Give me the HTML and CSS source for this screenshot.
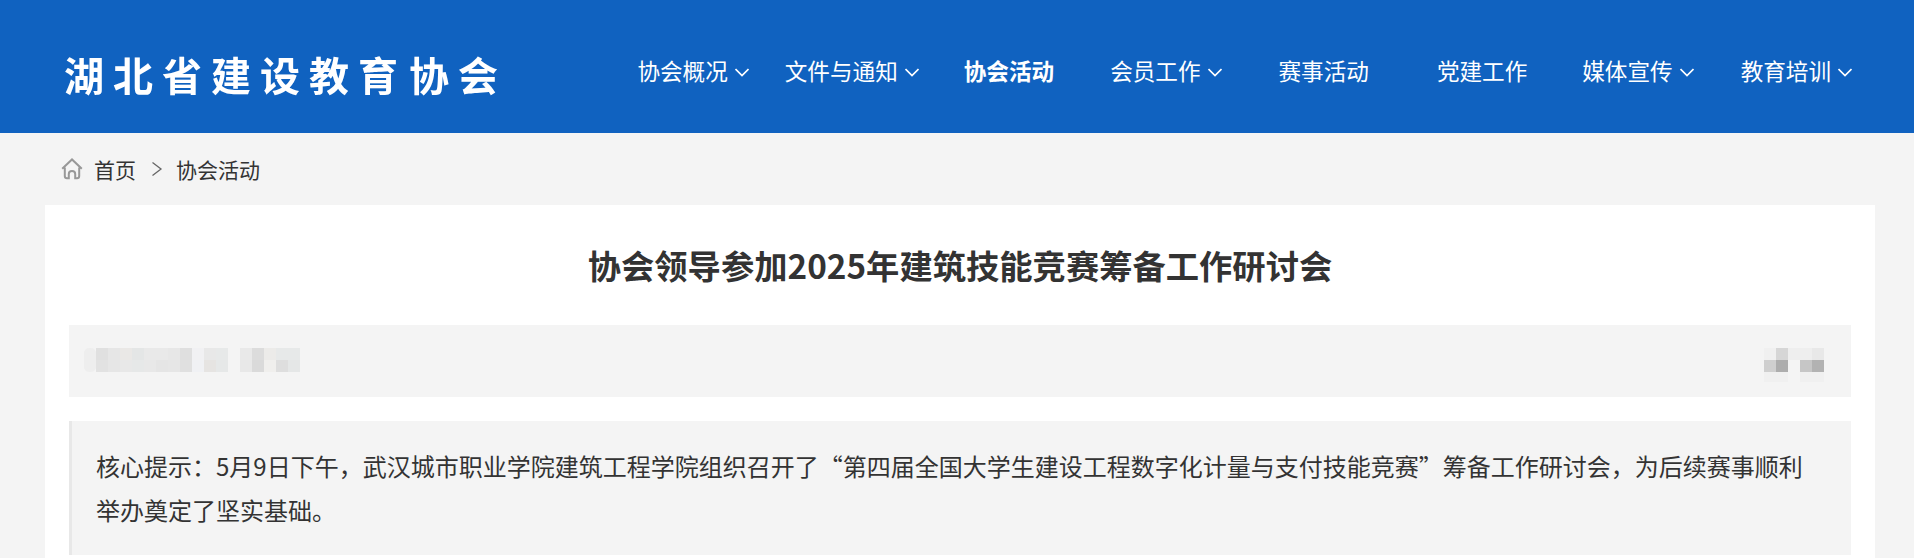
FILE: index.html
```html
<!DOCTYPE html>
<html lang="zh-CN">
<head>
    <meta charset="UTF-8">
    <meta name="viewport" content="width=device-width, initial-scale=1.0">
    <title>协会领导参加2025年建筑技能竞赛筹备工作研讨会</title>
    <link rel="stylesheet" href="styles.css">
</head>
<body>

<header class="site-header">
    <a class="logo" href="#">湖北省建设教育<span class="logo-end">协会</span></a>
    <nav class="main-nav">
        <a class="nav-item nav-a" href="#">协会概况<svg class="caret" viewBox="0 0 14 14"><path d="M.5 4 7 10.500 13.500 4"/></svg></a>
        <a class="nav-item nav-b" href="#">文件与通知<svg class="caret" viewBox="0 0 14 14"><path d="M.5 4 7 10.500 13.500 4"/></svg></a>
        <a class="nav-item nav-c active" href="#">协会活动</a>
        <a class="nav-item nav-d" href="#">会员工作<svg class="caret" viewBox="0 0 14 14"><path d="M.5 4 7 10.500 13.500 4"/></svg></a>
        <a class="nav-item nav-e" href="#">赛事活动</a>
        <a class="nav-item nav-f" href="#">党建工作</a>
        <a class="nav-item nav-g" href="#">媒体宣传<svg class="caret" viewBox="0 0 14 14"><path d="M.5 4 7 10.500 13.500 4"/></svg></a>
        <a class="nav-item" href="#">教育培训<svg class="caret" viewBox="0 0 14 14"><path d="M.5 4 7 10.500 13.500 4"/></svg></a>
    </nav>
</header>

<div class="crumbs">
    <svg class="home-icon" viewBox="0 0 22 22"><path d="M1.200 10.800 11 1.500l9.800 9.300M3.800 9.500V18c0 1.500.8 2.200 2.200 2.200h1.800v-4.200c0-1.800 1.300-3 3.200-3s3.200 1.200 3.200 3v4.200H16c1.400 0 2.200-.7 2.200-2.200V9.500"/></svg>
    <a href="#">首页</a>
    <svg class="crumb-sep" viewBox="0 0 12 18"><path d="M1.500 2.500 10 9l-8.500 6.500"/></svg>
    <a href="#">协会活动</a>
</div>

<main class="card">
    <h1>协会领导参加2025年建筑技能竞赛筹备工作研讨会</h1>

    <!-- pixelated source / date -->
    <div class="meta">
        <svg class="mosaic" width="216" height="26" viewBox="0 0 216 26">
            <rect x="0" y="0" width="12" height="24" rx="5" fill="#eeeeee"/>
            <g transform="translate(12 0)">
                <rect x="0" width="12" height="12" fill="#e0e0e0"/><rect x="12" width="12" height="12" fill="#e6e6e6"/><rect x="24" width="12" height="12" fill="#eae8e6"/><rect x="36" width="12" height="12" fill="#e4e6e6"/><rect x="48" width="12" height="12" fill="#e9e9e9"/><rect x="60" width="12" height="12" fill="#e9e9e9"/><rect x="72" width="12" height="12" fill="#e7e7e7"/><rect x="84" width="12" height="12" fill="#dfdfdf"/><rect x="96" width="12" height="12" fill="#f1f1f3"/><rect x="108" width="12" height="12" fill="#e8e8e8"/><rect x="120" width="12" height="12" fill="#e7e9e9"/><rect x="144" width="12" height="12" fill="#e9e9e9"/><rect x="156" width="12" height="12" fill="#dcdcdc"/><rect x="168" width="12" height="12" fill="#ecebe9"/><rect x="180" width="12" height="12" fill="#e7e9e9"/><rect x="192" width="12" height="12" fill="#e7e9e9"/>
            </g>
            <g transform="translate(12 12)">
                <rect x="0" width="12" height="12" fill="#e2e2e2"/><rect x="12" width="12" height="12" fill="#e6e6e6"/><rect x="24" width="12" height="12" fill="#e8e8e8"/><rect x="36" width="12" height="12" fill="#e6e8e8"/><rect x="48" width="12" height="12" fill="#e8e8e8"/><rect x="60" width="12" height="12" fill="#e5e5e5"/><rect x="72" width="12" height="12" fill="#e6e6e6"/><rect x="84" width="12" height="12" fill="#e0e0e0"/><rect x="96" width="12" height="12" fill="#f0f1f4"/><rect x="108" width="12" height="12" fill="#e6e4e2"/><rect x="120" width="12" height="12" fill="#e6e8e8"/><rect x="144" width="12" height="12" fill="#e8e8e8"/><rect x="156" width="12" height="12" fill="#dadada"/><rect x="168" width="12" height="12" fill="#f0efed"/><rect x="180" width="12" height="12" fill="#dedede"/><rect x="192" width="12" height="12" fill="#e5e7e7"/>
            </g>
        </svg>
        <svg class="mosaic" width="72" height="36" viewBox="0 0 72 36">
            <rect x="0" y="0" width="12" height="12" fill="#f0f0f0"/><rect x="12" y="0" width="12" height="12" fill="#d6d6d6"/><rect x="24" y="0" width="12" height="12" fill="#eeeeee"/><rect x="36" y="0" width="12" height="12" fill="#eeeeee"/><rect x="48" y="0" width="12" height="12" fill="#e8e8e8"/>
            <rect x="0" y="12" width="12" height="12" fill="#cfcfcf"/><rect x="12" y="12" width="12" height="12" fill="#adadad"/><rect x="36" y="12" width="12" height="12" fill="#c6c6c6"/><rect x="48" y="12" width="12" height="12" fill="#b2b2b2"/>
            <rect x="0" y="24" width="24" height="10" fill="#f0f0f0"/><rect x="36" y="24" width="24" height="10" fill="#f0f0f0"/>
        </svg>
    </div>

    <div class="summary">核心提示：5月9日下午，武汉城市职业学院建筑工程学院组织召开了“第四届全国大学生建设工程数字化计量与支付技能竞赛”筹备工作研讨会，为后续赛事顺利举办奠定了坚实基础。</div>
</main>

</body>
</html>
```

FILE: styles.css
```css
:root {
    --blue: #1062c0;
    --bg: #f4f4f4;
    --text: #333333;
}

* { box-sizing: border-box; }

html, body { height: 100%; }

body {
    margin: 0;
    background: var(--bg);
    color: var(--text);
    font-family: "Noto Sans CJK SC", "Liberation Sans", sans-serif;
    overflow: hidden;
}

a { color: inherit; text-decoration: none; }

/* Header */
.site-header {
    display: flex;
    align-items: center;
    justify-content: space-between;
    height: 133px;
    padding: 0 62px 0 64px;
    background: var(--blue);
    color: #fff;
}

.logo {
    display: block;
    margin-top: 14px;
    font-size: 40px;
    font-weight: 700;
    line-height: 1;
    letter-spacing: 9px;
    white-space: nowrap;
    filter: blur(.5px);
}
.logo-end { margin-left: 2px; }

.main-nav { display: flex; align-items: center; padding-top: 8px; }

.nav-item {
    display: flex;
    align-items: center;
    font-size: 22.6px;
    line-height: 32px;
    white-space: nowrap;
}
.nav-item.active { font-weight: 700; }
.nav-a { margin-right: 36px; }
.nav-b { margin-right: 45px; }
.nav-c { margin-right: 56px; }
.nav-d { margin-right: 57px; }
.nav-e { margin-right: 68px; }
.nav-f { margin-right: 55px; }
.nav-g { margin-right: 47px; }

.caret {
    width: 14px;
    height: 14px;
    margin: 2px 0 0 7px;
    fill: none;
    stroke: #fff;
    stroke-width: 1.7;
}

/* Breadcrumb */
.crumbs {
    display: flex;
    align-items: center;
    height: 72px;
    padding-left: 61px;
    font-size: 21px;
}
.home-icon {
    width: 22px;
    height: 22px;
    margin-right: 11px;
    fill: none;
    stroke: #989898;
    stroke-width: 2;
}
.crumb-sep {
    width: 12px;
    height: 18px;
    margin: 0 13px 0 15px;
    fill: none;
    stroke: #666;
    stroke-width: 1.3;
}

/* Article */
.card {
    margin: 0 39px 0 45px;
    padding: 0 24px;
    background: #fff;
    height: 353px;
}

h1 {
    margin: 0;
    height: 120px;
    font-size: 33.3px;
    line-height: 120px;
    font-weight: 700;
    text-align: center;
}

.meta {
    display: flex;
    align-items: flex-start;
    justify-content: space-between;
    height: 72px;
    padding: 23px 15px 0;
    background: var(--bg);
}
.mosaic { display: block; }

.summary {
    margin-top: 24px;
    padding: 23px 48px 23px 24px;
    background: var(--bg);
    border-left: 3px solid #e8e8e8;
    font-size: 24px;
    line-height: 44px;
}
```
